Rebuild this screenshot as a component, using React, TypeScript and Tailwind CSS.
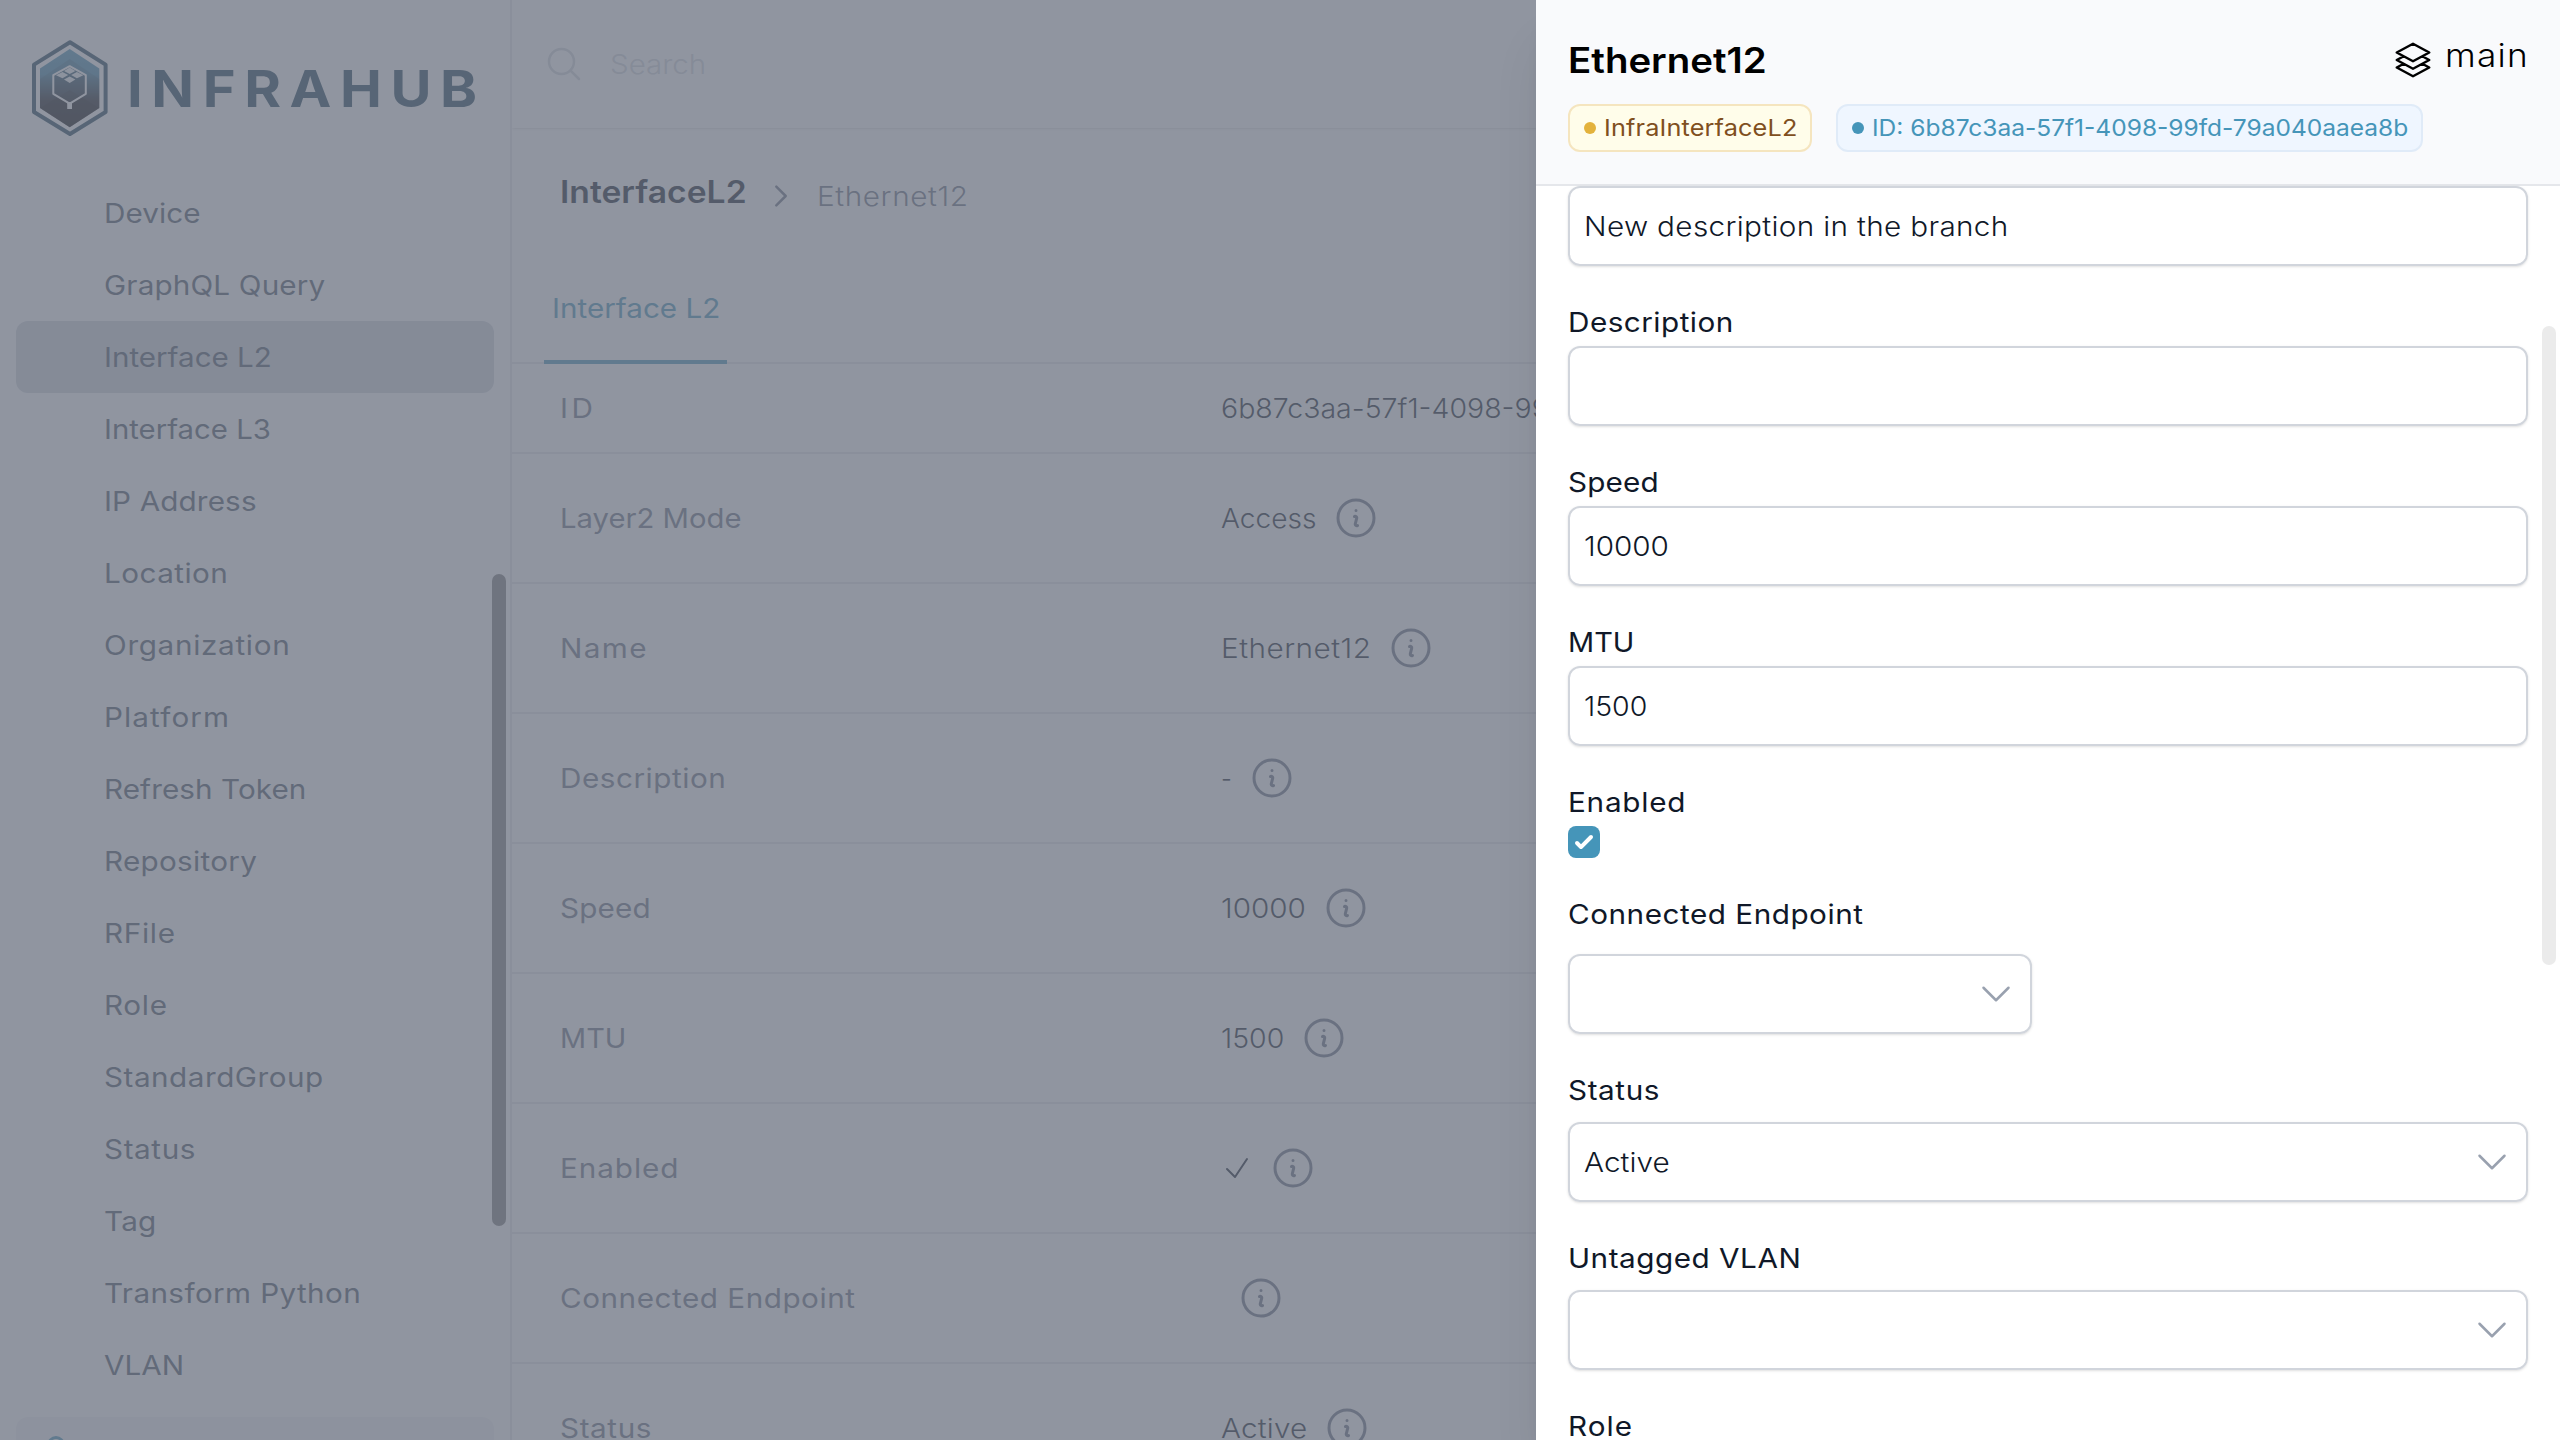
import { useLayoutEffect, useRef, useState, type ReactNode } from "react";

const MAX_STRETCH = 1.1;

/** A run of text widened and tracked so that its glyphs span `w` pixels. */
function Fit({
  children,
  w,
  className = "",
  raised,
}: {
  children: string;
  w: number;
  className?: string;
  raised?: boolean;
}) {
  const ref = useRef<HTMLSpanElement>(null);
  const [fit, setFit] = useState({ spacing: 0, stretch: 1, margin: 0 });
  useLayoutEffect(() => {
    const el = ref.current;
    const ctx = document.createElement("canvas").getContext("2d");
    if (!el || !ctx) return;
    const cs = getComputedStyle(el);
    ctx.font = `${cs.fontWeight} ${cs.fontSize} ${cs.fontFamily}`;
    const m = ctx.measureText(children);
    const ink = m.actualBoundingBoxLeft + m.actualBoundingBoxRight;
    const stretch = Math.min(MAX_STRETCH, w / ink);
    const spacing = (w / stretch - ink) / Math.max(1, children.length - 1);
    const advance = m.width + spacing * children.length;
    setFit({ spacing, stretch, margin: (stretch - 1) * advance - spacing * stretch });
  }, [children, w]);
  return (
    <span
      ref={ref}
      className={`inline-block origin-left whitespace-nowrap ${raised ? "" : "translate-y-px"} ${className}`}
      style={{
        letterSpacing: `${fit.spacing}px`,
        transform: `scaleX(${fit.stretch})`,
        marginRight: `${fit.margin}px`,
      }}
    >
      {children}
    </span>
  );
}

function Icon({ d, className, stroke = 1.5 }: { d: string; className: string; stroke?: number }) {
  return (
    <svg
      viewBox="0 0 24 24"
      fill="none"
      stroke="currentColor"
      strokeWidth={stroke}
      strokeLinecap="round"
      strokeLinejoin="round"
      className={`shrink-0 ${className}`}
    >
      <path d={d} />
    </svg>
  );
}

const SEARCH = "m21 21-5.197-5.197m0 0A7.5 7.5 0 1 0 5.196 5.196a7.5 7.5 0 0 0 10.607 10.607Z";
const INFO =
  "m11.25 11.25.041-.02a.75.75 0 0 1 1.063.852l-.708 2.836a.75.75 0 0 0 1.063.853l.041-.021M21 12a9 9 0 1 1-18 0 9 9 0 0 1 18 0Zm-9-3.75h.008v.008H12V8.25Z";
const CHECK = "m4.5 12.75 6 6 9-13.5";
const CHEVRON_DOWN = "m19.5 8.25-7.5 7.5-7.5-7.5";
const CHEVRON_RIGHT = "m8.25 4.5 7.5 7.5-7.5 7.5";
const STACK =
  "M6.429 9.75 2.25 12l4.179 2.25m0-4.5 5.571 3 5.571-3m-11.142 0L2.25 7.5 12 2.25l9.75 5.25-4.179 2.25m0 0L21.75 12l-4.179 2.25m0 0 4.179 2.25L12 21.75 2.25 16.5l4.179-2.25m11.142 0-5.571 3-5.571-3";

function Logo() {
  return (
    <svg viewBox="0 0 76 96" className="h-24 w-[76px] shrink-0">
      <defs>
        <linearGradient id="hex" x1="0" y1="0" x2="0" y2="1">
          <stop offset="0" stopColor="#4690b4" />
          <stop offset="0.32" stopColor="#3f84a8" />
          <stop offset="0.66" stopColor="#18181f" />
          <stop offset="1" stopColor="#08080c" />
        </linearGradient>
      </defs>
      <path
        d="M38 2.2 73.6 24.6V72L38 94 2 72V24.6Z"
        fill="none"
        stroke="#1f4258"
        strokeWidth="4"
        strokeLinejoin="round"
      />
      <path d="M37.700 9 67.300 28.500V68L37.700 87.300 8 68V28.500Z" fill="url(#hex)" />
      <path d="M8 39 37.700 19 67.300 39V68L37.700 87.300 8 68Z" fill="#101820" opacity="0.15" />
      <path d="M8 68 37.700 50 67.300 68 37.700 87.300Z" fill="#000" opacity="0.3" />
      <path
        d="M37.700 26.200 53.800 35.200V53.800L37.700 63.600 21.300 53.800V35.200Z"
        fill="#1d2a38"
        fillOpacity="0.45"
        stroke="#fff"
        strokeWidth="2"
        strokeLinejoin="round"
      />
      <rect x="35.200" y="62" width="4.800" height="7" fill="#fff" />
      <g fill="#fff" opacity="0.95">
        <path d="M37.700 27.600 43.400 31 37.700 34 32 31Z" />
        <path d="M30.500 31.900 36.200 35.100 30.500 38.200 24 35.200Z" />
        <path d="M44.900 31.900 51.400 35.200 44.900 38.200 39.200 35.100Z" />
        <path d="M37.700 36.400 43.400 39.500 37.700 43 32 39.500Z" />
      </g>
    </svg>
  );
}

const NAV: { label: string; w: number; active?: boolean }[] = [
  { label: "Device", w: 93.5 },
  { label: "GraphQL Query", w: 220 },
  { label: "Interface L2", w: 164, active: true },
  { label: "Interface L3", w: 164 },
  { label: "IP Address", w: 149 },
  { label: "Location", w: 119.5 },
  { label: "Organization", w: 182.5 },
  { label: "Platform", w: 121 },
  { label: "Refresh Token", w: 198 },
  { label: "Repository", w: 150.5 },
  { label: "RFile", w: 68 },
  { label: "Role", w: 60 },
  { label: "StandardGroup", w: 217.5 },
  { label: "Status", w: 89 },
  { label: "Tag", w: 49.5 },
  { label: "Transform Python", w: 253.5 },
  { label: "VLAN", w: 77.5 },
];

function Sidebar() {
  return (
    <aside className="relative flex w-[512px] shrink-0 flex-col border-r-2 border-gray-200 px-4">
      <div className="flex h-[177px] shrink-0 items-start pt-10 pl-4">
        <Logo />
        <Fit w={345} raised className="ml-[19px] text-[51px] leading-[97px] font-bold text-[#1f4258]">
          INFRAHUB
        </Fit>
      </div>
      <nav className="flex flex-col">
        {NAV.map((n) => (
          <a
            key={n.label}
            className={`flex h-[72px] shrink-0 items-center rounded-xl pl-[88px] text-[27px] font-normal text-gray-600 ${
              n.active ? "bg-gray-300" : ""
            }`}
          >
            <Fit w={n.w}>{n.label}</Fit>
          </a>
        ))}
      </nav>
      <div className="mt-4 h-[72px] shrink-0 rounded-xl bg-gray-100 pt-[18px] pl-[30px]">
        <svg viewBox="0 0 20 20" className="h-5 w-5 fill-none stroke-[#4595b9] stroke-[3]">
          <circle cx="10" cy="10" r="7.500" />
        </svg>
      </div>
      <div className="absolute top-[574px] right-1 h-[652px] w-3.5 rounded-full bg-[#7c7c7c]" />
    </aside>
  );
}

const ROWS: { label: string; lw: number; value?: string; vw?: number; check?: boolean }[] = [
  { label: "Layer2 Mode", lw: 178.5, value: "Access", vw: 94.5 },
  { label: "Name", lw: 83.5, value: "Ethernet12", vw: 146 },
  { label: "Description", lw: 161.5, value: "-", vw: 8 },
  { label: "Speed", lw: 88, value: "10000", vw: 82 },
  { label: "MTU", lw: 62, value: "1500", vw: 60.5 },
  { label: "Enabled", lw: 114.5, check: true },
  { label: "Connected Endpoint", lw: 294 },
  { label: "Status", lw: 89, value: "Active", vw: 85.5 },
];

function Details() {
  return (
    <main className="flex grow flex-col text-[27px]">
      <div className="flex h-32 shrink-0 items-center pl-8 text-gray-300 shadow">
        <Icon d={SEARCH} className="size-10" />
        <Fit w={93} className="ml-[26px] font-[350]">
          Search
        </Fit>
      </div>
      <div className="flex h-[136px] shrink-0 items-center pl-12">
        <Fit w={183} raised className="pb-2 text-[31px] font-semibold text-gray-900">
          InterfaceL2
        </Fit>
        <Icon d={CHEVRON_RIGHT} stroke={2} className="ml-[19px] size-[30px] text-gray-500" />
        <Fit w={147} className="ml-[21px] font-[350] text-gray-500">
          Ethernet12
        </Fit>
      </div>
      <div className="flex h-[100px] shrink-0 border-b-2 border-gray-200 pl-8">
        <div className="-mb-0.5 flex w-[183px] items-center border-b-4 border-[#4595b9] pb-2 pl-2 text-[#4595b9]">
          <Fit w={164.5} className="font-normal">
            Interface L2
          </Fit>
        </div>
      </div>
      <div className="flex h-[90px] shrink-0 items-center border-b-2 border-gray-200 pl-12">
        <div className="w-[661px] shrink-0 font-normal text-gray-500">
          <Fit w={29}>ID</Fit>
        </div>
        <Fit w={564} className="font-[350] text-gray-900">
          6b87c3aa-57f1-4098-99fd-79a040aaea8b
        </Fit>
      </div>
      {ROWS.map((r) => (
        <div key={r.label} className="flex h-[130px] shrink-0 items-center border-b-2 border-gray-200 pl-12">
          <div className="w-[661px] shrink-0 font-normal text-gray-500">
            <Fit w={r.lw}>{r.label}</Fit>
          </div>
          {r.value && (
            <Fit w={r.vw ?? 0} className="font-[350] text-gray-900">
              {r.value}
            </Fit>
          )}
          {r.check && <Icon d={CHECK} className="size-8 text-gray-900" />}
          <Icon d={INFO} className="ml-4 size-12 text-gray-500" />
        </div>
      ))}
    </main>
  );
}

function Label({ children, w }: { children: string; w: number }) {
  return (
    <div className="mt-9 flex h-10 items-center font-normal">
      <Fit w={w}>{children}</Fit>
    </div>
  );
}

function Box({ children, className = "", select }: { children?: ReactNode; className?: string; select?: boolean }) {
  return (
    <div
      className={`flex h-20 items-center justify-between rounded-xl border-2 border-gray-300 pr-3.5 pl-3.5 font-[350] shadow-sm ${className}`}
    >
      <div>{children}</div>
      {select && <Icon d={CHEVRON_DOWN} className="size-10 text-gray-400" />}
    </div>
  );
}

function Panel() {
  return (
    <section className="absolute inset-y-0 right-0 flex w-[1024px] flex-col overflow-hidden bg-white text-[27px] text-gray-900">
      <header className="flex h-[186px] shrink-0 flex-col border-b-2 border-gray-200 bg-[#f9fafc] px-8 text-black">
        <div className="mt-9 flex h-12 items-center justify-between">
          <Fit w={194.5} raised className="text-[35px] font-semibold">
            Ethernet12
          </Fit>
          <div className="flex items-center">
            <Icon d={STACK} className="mr-3 size-10" />
            <Fit w={78.5} raised className="pb-2 text-[32px] font-[350]">
              main
            </Fit>
          </div>
        </div>
        <div className="mt-5 flex gap-6 text-[23px] font-normal">
          <div className="flex h-12 w-[244px] items-center rounded-xl border-2 border-[#f5e5bf] bg-[#fffdea] pl-3.5 text-[#7f4f20]">
            <i className="mr-2 size-3 rounded-full bg-[#e3b23c]" />
            <Fit w={190} raised>
              InfraInterfaceL2
            </Fit>
          </div>
          <div className="flex h-12 w-[587px] items-center rounded-xl border-2 border-[#e0ebf8] bg-[#eff6ff] pl-3.5 text-[#4595b9]">
            <i className="mr-2 size-3 rounded-full bg-[#4595b9]" />
            <Fit w={533} raised>
              ID: 6b87c3aa-57f1-4098-99fd-79a040aaea8b
            </Fit>
          </div>
        </div>
      </header>
      <div className="flex flex-col px-8">
        <Box>
          <Fit w={420}>New description in the branch</Fit>
        </Box>
        <Label w={161}>Description</Label>
        <Box className="mt-1" />
        <Label w={88}>Speed</Label>
        <Box className="mt-1">
          <Fit w={82}>10000</Fit>
        </Box>
        <Label w={62}>MTU</Label>
        <Box className="mt-1">
          <Fit w={60.5}>1500</Fit>
        </Box>
        <Label w={113.5}>Enabled</Label>
        <div className="mt-1 flex size-8 items-center justify-center rounded-lg bg-[#4595b9]">
          <svg viewBox="0 0 16 16" fill="#fff" className="size-8">
            <path d="M12.207 4.793a1 1 0 0 1 0 1.414l-5 5a1 1 0 0 1-1.414 0l-2-2a1 1 0 0 1 1.414-1.414L6.500 9.086l4.293-4.293a1 1 0 0 1 1.414 0z" />
          </svg>
        </div>
        <Label w={294}>Connected Endpoint</Label>
        <Box select className="mt-5 w-[464px]" />
        <Label w={89}>Status</Label>
        <Box select className="mt-3">
          <Fit w={85}>Active</Fit>
        </Box>
        <Label w={228}>Untagged VLAN</Label>
        <Box select className="mt-3" />
        <Label w={61}>Role</Label>
      </div>
      <div className="absolute top-[326px] right-1 h-[639px] w-3.5 rounded-full bg-[#ebebeb]" />
    </section>
  );
}

export default function App() {
  return (
    <div className="relative flex h-[1440px] w-[2560px] overflow-hidden bg-white font-['Inter',sans-serif]">
      <Sidebar />
      <Details />
      <div className="absolute inset-0 bg-[#6b7280]/75" />
      <div className="absolute inset-y-0 right-0 w-[1024px] shadow-[0_40px_50px_-10px_rgba(0,0,0,0.1),0_16px_20px_-12px_rgba(0,0,0,0.1)]" />
      <Panel />
    </div>
  );
}
